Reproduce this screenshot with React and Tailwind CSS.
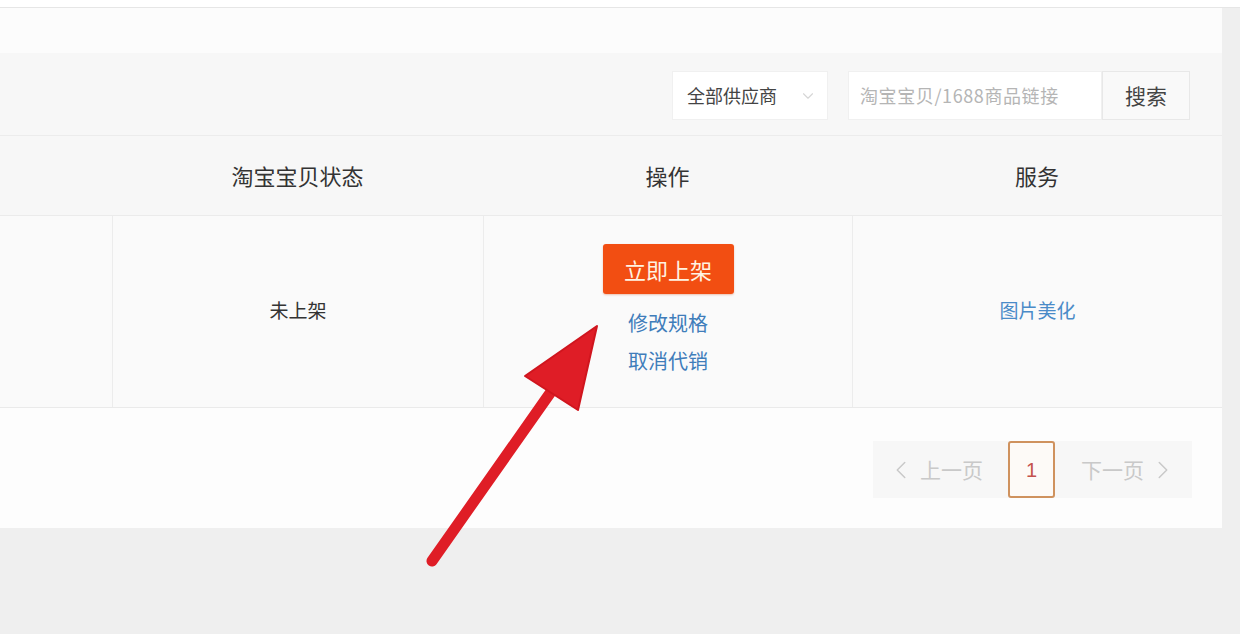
import { ChevronLeft, ChevronRight, ChevronDown } from "lucide-react";

const font = { fontFamily: '"Noto Sans CJK SC", "Noto Sans", sans-serif' };

// red annotation arrow drawn over the table
function Arrow() {
  return (
    <svg
      className="absolute inset-0 pointer-events-none"
      width="1240"
      height="634"
      viewBox="0 0 1240 634"
    >
      <line
        x1="432"
        y1="561"
        x2="553"
        y2="389"
        stroke="#df1d26"
        strokeWidth="11"
        strokeLinecap="round"
      />
      <polygon
        points="597,326 525,376 578,410"
        fill="#df1d26"
        stroke="#d0151e"
        strokeWidth="2"
        strokeLinejoin="round"
      />
    </svg>
  );
}

function Toolbar() {
  return (
    <div className="h-[83px] bg-[#f7f7f7] border-b border-[#ececec] flex items-start justify-end pt-[18px] pr-[32px]">
      <div className="w-[156px] h-[49px] bg-white border border-[#f0f0f0] flex items-center pl-[14px] pr-[10px] justify-between">
        <span className="text-[18px] text-[#444]">全部供应商</span>
        <ChevronDown size={18} strokeWidth={1.5} className="text-[#d6d6d6]" />
      </div>
      <div className="ml-[20px] w-[254px] h-[49px] bg-white border border-[#f0f0f0] flex items-center pl-[11px]">
        <span className="text-[18px] tracking-[0.6px] text-[#b5b5b5]">淘宝宝贝/1688商品链接</span>
      </div>
      <div className="w-[88px] h-[49px] bg-[#f9f9f9] border border-[#e8e8e8] flex items-center justify-center">
        <span className="text-[21px] text-[#444]">搜索</span>
      </div>
    </div>
  );
}

function Header() {
  return (
    <div className="h-[80px] bg-[#f7f7f7] border-b border-[#ebebeb] flex items-center text-[22px] text-[#333]">
      <div className="w-[112px]" />
      <div className="w-[371px] text-center">淘宝宝贝状态</div>
      <div className="w-[369px] text-center">操作</div>
      <div className="w-[370px] text-center">服务</div>
    </div>
  );
}

function Row() {
  return (
    <div className="h-[192px] bg-[#fafafa] border-b border-[#eaeaea] flex">
      <div className="w-[112px]" />
      <div className="w-[371px] border-l border-[#ececec] flex items-center justify-center text-[19px] text-[#333] pb-[2px]">
        未上架
      </div>
      <div className="w-[369px] border-l border-[#ececec] flex flex-col items-center pt-[28px]">
        <button className="w-[131px] h-[50px] rounded-[3px] bg-[#f24e12] text-[#fff3e2] text-[22px] shadow-[0_1px_2px_rgba(200,60,0,0.3)]">
          立即上架
        </button>
        <a className="mt-[17px] leading-[24px] text-[20px] text-[#3f7dba]">修改规格</a>
        <a className="mt-[14px] leading-[24px] text-[20px] text-[#3f7dba]">取消代销</a>
      </div>
      <div className="w-[370px] border-l border-[#ececec] flex items-center justify-center text-[19px] text-[#4a8bc8] pb-[2px]">
        图片美化
      </div>
    </div>
  );
}

function Pagination() {
  return (
    <div className="h-[120px] bg-[#fdfdfd] flex justify-end items-start pt-[33px] pr-[30px]">
      <div className="h-[57px] flex bg-[#f7f7f7]">
        <div className="w-[135px] flex items-center pl-[13px] gap-[4px] text-[21px] text-[#c9c9c9]">
          <ChevronLeft size={30} strokeWidth={1.2} />
          <span>上一页</span>
        </div>
        <div className="w-[47px] h-[57px] bg-[#fdfaf7] border-2 border-[#cf925e] rounded-[3px] flex items-center justify-center text-[20px] text-[#c4524c] font-['Liberation_Sans',sans-serif]">
          1
        </div>
        <div className="w-[137px] flex items-center justify-end pr-[14px] gap-[4px] text-[21px] text-[#c9c9c9]">
          <span>下一页</span>
          <ChevronRight size={30} strokeWidth={1.2} />
        </div>
      </div>
    </div>
  );
}

export default function App() {
  return (
    <div className="relative w-[1240px] h-[634px] overflow-hidden bg-[#efefef]" style={font}>
      <div className="h-[8px] bg-white border-b border-[#e6e6e6]" />
      <div className="flex">
        <div className="w-[1222px]">
          <div className="h-[45px] bg-[#fcfcfc]" />
          <Toolbar />
          <Header />
          <Row />
          <Pagination />
        </div>
        <div className="flex-1" />
      </div>
      <Arrow />
    </div>
  );
}
